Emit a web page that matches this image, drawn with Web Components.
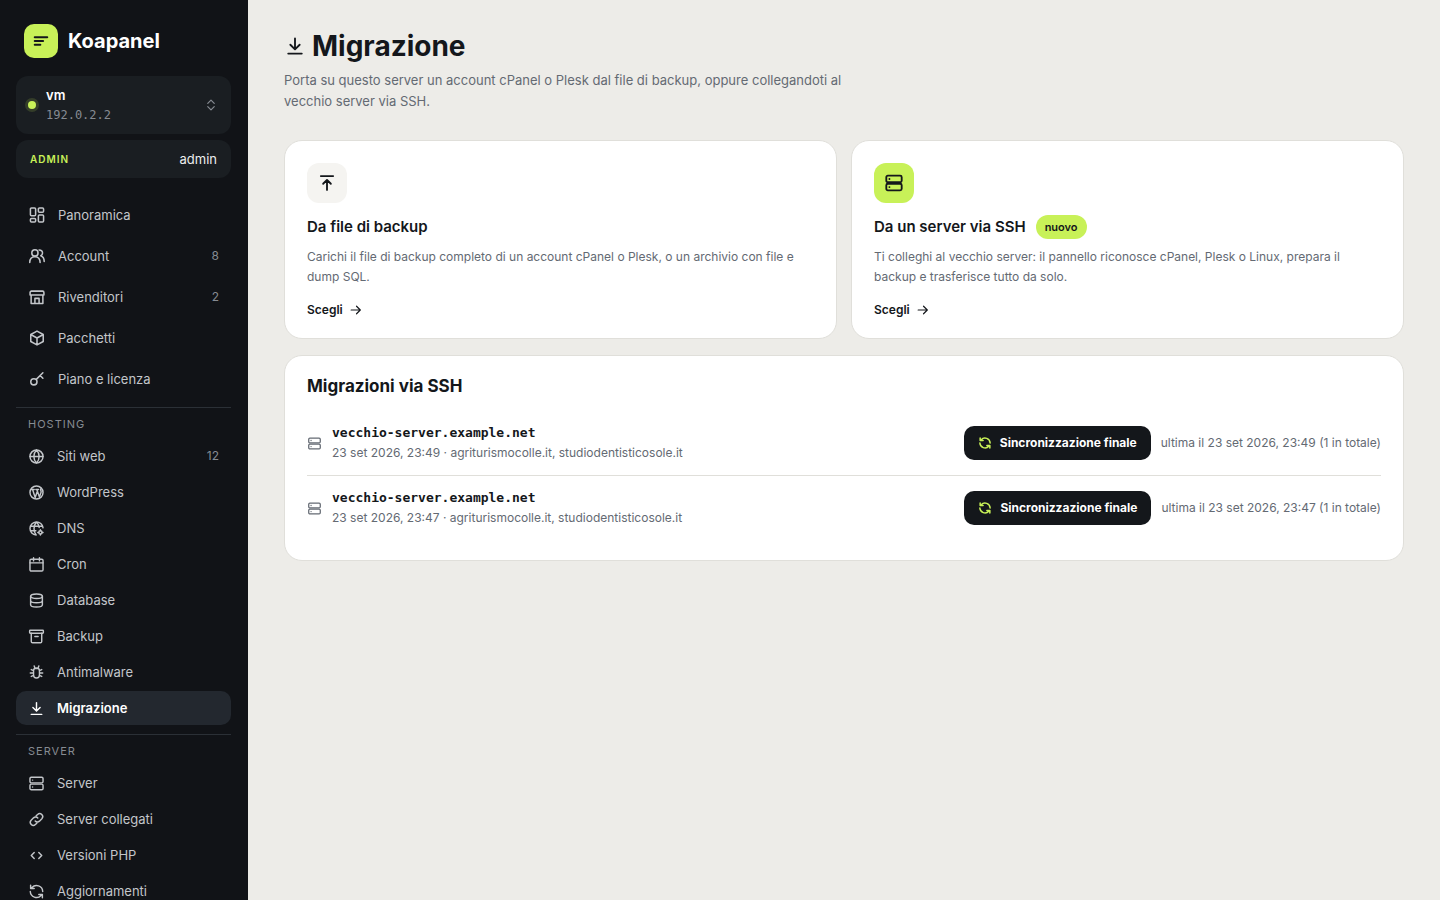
<!DOCTYPE html>
<html lang="it">
<head>
<meta charset="utf-8">
<meta name="viewport" content="width=device-width, initial-scale=1">
<title>Migrazione · Koapanel</title>
<style>
  :root {
    --ink: #14171b;
    --sidebar: #111317;
    --sidebar-box: #1a1e22;
    --sidebar-active: #23282f;
    --sidebar-line: #2b3036;
    --sidebar-text: #c3c6ca;
    --sidebar-muted: #868b92;
    --lime: #c8f158;
    --page: #edece8;
    --card: #ffffff;
    --line: #e0dfda;
    --muted: #646a73;
    --mono: "DejaVu Sans Mono", monospace;
  }

  body {
    margin: 0;
    background: var(--page);
    color: var(--ink);
    font: 13px/20px Inter, sans-serif;
  }
</style>
</head>
<body>
<kp-app>
  <kp-sidebar slot="sidebar">
    <kp-server-switch slot="top" name="vm" address="192.0.2.2"></kp-server-switch>
    <kp-role slot="top" role-name="ADMIN">admin</kp-role>

    <kp-nav-group large>
      <kp-nav-item icon="dashboard">Panoramica</kp-nav-item>
      <kp-nav-item icon="users" count="8">Account</kp-nav-item>
      <kp-nav-item icon="store" count="2">Rivenditori</kp-nav-item>
      <kp-nav-item icon="box">Pacchetti</kp-nav-item>
      <kp-nav-item icon="key">Piano e licenza</kp-nav-item>
    </kp-nav-group>
    <kp-nav-group label="HOSTING">
      <kp-nav-item icon="globe" count="12">Siti web</kp-nav-item>
      <kp-nav-item icon="wordpress">WordPress</kp-nav-item>
      <kp-nav-item icon="dns">DNS</kp-nav-item>
      <kp-nav-item icon="calendar">Cron</kp-nav-item>
      <kp-nav-item icon="database">Database</kp-nav-item>
      <kp-nav-item icon="archive">Backup</kp-nav-item>
      <kp-nav-item icon="bug">Antimalware</kp-nav-item>
      <kp-nav-item icon="download" active>Migrazione</kp-nav-item>
    </kp-nav-group>
    <kp-nav-group label="SERVER">
      <kp-nav-item icon="server">Server</kp-nav-item>
      <kp-nav-item icon="link">Server collegati</kp-nav-item>
      <kp-nav-item icon="code">Versioni PHP</kp-nav-item>
      <kp-nav-item icon="refresh">Aggiornamenti</kp-nav-item>
    </kp-nav-group>
  </kp-sidebar>

  <kp-page-header icon="download" heading="Migrazione">Porta su questo server un account cPanel o Plesk dal file di backup, oppure collegandoti al vecchio server via SSH.</kp-page-header>

  <kp-choices>
    <kp-choice icon="upload" heading="Da file di backup">Carichi il file di backup completo di un account cPanel o Plesk, o un archivio con file e dump SQL.</kp-choice>
    <kp-choice icon="server" heading="Da un server via SSH" badge="nuovo" accent>Ti colleghi al vecchio server: il pannello riconosce cPanel, Plesk o Linux, prepara il backup e trasferisce tutto da solo.</kp-choice>
  </kp-choices>

  <kp-panel heading="Migrazioni via SSH">
    <kp-migration host="vecchio-server.example.net" last="ultima il 23 set 2026, 23:49 (1 in totale)">23 set 2026, 23:49 · agriturismocolle.it, studiodentisticosole.it</kp-migration>
    <kp-migration host="vecchio-server.example.net" last="ultima il 23 set 2026, 23:47 (1 in totale)">23 set 2026, 23:47 · agriturismocolle.it, studiodentisticosole.it</kp-migration>
  </kp-panel>
</kp-app>

<script>
const ICONS = {
  logo: '<path d="M3 6.5h18M3 12h12M3 17.5h8"/>',
  dashboard: '<rect x="2.5" y="2" width="7.5" height="11" rx="1.5"/><rect x="14" y="2" width="7.5" height="6" rx="1.5"/><rect x="2.5" y="17" width="7.5" height="5" rx="1.5"/><rect x="14" y="12" width="7.5" height="10" rx="1.5"/>',
  users: '<circle cx="9" cy="7.5" r="4.5"/><path d="M1.500 21.500c0-5 2.700-8.500 7.500-8.500s7.500 3.500 7.500 8.500M15 3.200c3 .1 5 1.900 5 4.500 0 1.800-1 3.300-2.600 4 3 1.100 5 4.300 5 8.300"/>',
  store: '<path d="M2 9V5.500a2 2 0 0 1 2-2h16a2 2 0 0 1 2 2V9zM3.500 9v12.500h17V9M9 21v-7h6v7"/>',
  box: '<path d="M12 2l9 5v10l-9 5-9-5V7zM3.500 7.300L12 12l8.500-4.700M12 12v9.500"/>',
  key: '<circle cx="7.500" cy="16" r="4.500"/><path d="M11 12.500L20.500 3M16.500 7l4 4"/>',
  globe: '<circle cx="12" cy="12" r="10"/><path d="M2 12h20M12 2c-5.400 5.500-5.400 14.500 0 20M12 2c5.400 5.500 5.400 14.500 0 20"/>',
  wordpress: '<circle cx="12" cy="12" r="10"/><path d="M4.500 7.500h4M11 7.500h4M6 7.500l4 12 3-8.500M12.500 7.500l4 11.500 2.500-7.500c.7-2.200-1.600-3.400-.6-5"/>',
  dns: '<path d="M11.500 22A10 10 0 1 1 22 11M2.500 8.500h19M2.500 15.500H11M12 2C7 7.500 7 16.500 11.500 22M12 2c2.700 2.800 4 6 4.100 8.500"/><circle cx="18" cy="18" r="2.500"/><path d="M18 14v1.500M18 20.500V22M14 18h1.500M20.500 18H22"/>',
  calendar: '<rect x="2" y="4" width="20" height="18" rx="2"/><path d="M2 9.500h20M7.500 1.500v5M16.500 1.500v5"/>',
  database: '<ellipse cx="12" cy="5.500" rx="9" ry="3.500"/><path d="M3 5.500v13c0 2 4 3.500 9 3.500s9-1.500 9-3.500v-13M3 12c0 2 4 3.500 9 3.500s9-1.500 9-3.500"/>',
  archive: '<rect x="1.500" y="2.500" width="21" height="4.500" rx="1"/><path d="M4 7v12.500a2 2 0 0 0 2 2h12a2 2 0 0 0 2-2V7M9.500 12h5"/>',
  bug: '<path d="M7.500 9.500a4.500 4.500 0 0 1 9 0V16a4.500 4.500 0 0 1-9 0zM8.500 6h7M8.500 2l1 3M15.500 2l-1 3M7.500 9L4 7.500M16.500 9L20 7.500M7.500 12.800H2.500M16.500 12.800h5M7.500 16.500L4 18M16.500 16.500L20 18"/>',
  download: '<path d="M12 3v12.500M6.500 10.500L12 16l5.500-5.500M4 21h16"/>',
  upload: '<path d="M12 21V8.500M7 13l5-5 5 5M4 3h16"/>',
  server: '<rect x="2" y="2.500" width="20" height="8.500" rx="2"/><rect x="2" y="13" width="20" height="8.500" rx="2"/><path d="M6 6.800h.1M6 17.300h.1"/>',
  link: '<path d="M10 14.200a4.500 4.500 0 0 0 6.500.3l3.700-3.700a4.600 4.600 0 0 0-6.500-6.500l-2.200 2.100M14 9.800a4.500 4.500 0 0 0-6.500-.3l-3.700 3.700a4.600 4.600 0 0 0 6.500 6.500l2.200-2.100"/>',
  code: '<path d="M8.500 7.500L4 12l4.500 4.500M15.500 7.500L20 12l-4.500 4.500"/>',
  refresh: '<path d="M21.500 12A9.500 9.500 0 0 0 5 6M2.500 12A9.500 9.500 0 0 0 19 18M3 2.500v5h5.500M21 21.500v-5h-5.500"/>',
  arrow: '<path d="M3 12h17M13 5l7 7-7 7"/>',
  updown: '<path d="M5 8.500l7-7 7 7M5 15.500l7 7 7-7"/>',
};

// shared by every element: attributes are read once, when it is connected
class KpElement extends HTMLElement {
  constructor() {
    super();
    this.shadow = this.attachShadow({ mode: 'open' });
  }

  connectedCallback() {
    this.shadow.innerHTML = this.render();
  }

  attr(name) {
    return this.getAttribute(name) || '';
  }
}

class KpIcon extends KpElement {
  render() {
    return `
      <style>
        :host {
          display: block;
          flex: none;
          width: var(--icon-size, 17px);
          height: var(--icon-size, 17px);
        }

        svg {
          display: block;
          width: 100%;
          height: 100%;
          fill: none;
          stroke: currentColor;
          stroke-width: var(--icon-stroke, 2.2);
          stroke-linecap: round;
          stroke-linejoin: round;
        }
      </style>
      <svg viewBox="-1 -1 26 26" aria-hidden="true">${ICONS[this.attr('name')]}</svg>
    `;
  }
}

class KpApp extends KpElement {
  render() {
    return `
      <style>
        :host {
          display: grid;
          grid-template-columns: 248px minmax(0, 1fr);
          min-height: 100vh;
        }

        main {
          display: flex;
          flex-direction: column;
          gap: 16px;
          padding: 28px 36px;
        }
      </style>
      <slot name="sidebar"></slot>
      <main><slot></slot></main>
    `;
  }
}

class KpSidebar extends KpElement {
  render() {
    return `
      <style>
        :host {
          display: flex;
          flex-direction: column;
          box-sizing: border-box;
          position: sticky;
          top: 0;
          height: 100vh;
          padding: 24px 17px 0 16px;
          overflow-y: auto;
          scrollbar-width: none;
          background: var(--sidebar);
          color: var(--sidebar-text);
        }

        .brand {
          display: flex;
          align-items: center;
          gap: 10px;
          padding: 0 8px;
          margin-bottom: 18px;
          color: #fff;
          font-size: 20px;
          font-weight: 700;
          text-decoration: none;
        }

        .mark {
          display: grid;
          place-items: center;
          width: 34px;
          height: 34px;
          border-radius: 10px;
          background: var(--lime);
          color: var(--ink);
          --icon-size: 18px;
          --icon-stroke: 3;
        }

        .top {
          display: flex;
          flex-direction: column;
          gap: 6px;
          margin-bottom: 18px;
        }
      </style>
      <a class="brand" href="#"><span class="mark"><kp-icon name="logo"></kp-icon></span>Koapanel</a>
      <div class="top"><slot name="top"></slot></div>
      <nav><slot></slot></nav>
    `;
  }
}

class KpServerSwitch extends KpElement {
  render() {
    return `
      <style>
        :host {
          display: block;
        }

        button {
          display: flex;
          align-items: center;
          gap: 10px;
          width: 100%;
          padding: 9px 14px 9px 12px;
          border: 0;
          border-radius: 12px;
          background: var(--sidebar-box);
          color: var(--sidebar-muted);
          font: inherit;
          text-align: left;
          cursor: pointer;
          --icon-size: 12px;
          --icon-stroke: 2.6;
        }

        .dot {
          width: 8px;
          height: 8px;
          border-radius: 50%;
          background: var(--lime);
          box-shadow: 0 0 0 3px rgba(200, 241, 88, 0.15);
        }

        .text {
          flex: 1;
        }

        .name {
          display: block;
          color: #fff;
          font-weight: 600;
        }

        .address {
          display: block;
          font: 12px/20px var(--mono);
        }
      </style>
      <button type="button">
        <span class="dot"></span>
        <span class="text">
          <span class="name">${this.attr('name')}</span>
          <span class="address">${this.attr('address')}</span>
        </span>
        <kp-icon name="updown"></kp-icon>
      </button>
    `;
  }
}

class KpRole extends KpElement {
  render() {
    return `
      <style>
        :host {
          display: flex;
          align-items: center;
          justify-content: space-between;
          padding: 9px 14px;
          border-radius: 12px;
          background: var(--sidebar-box);
          color: #eceded;
        }

        b {
          color: var(--lime);
          font-size: 10px;
          font-weight: 600;
          letter-spacing: 1px;
        }
      </style>
      <b>${this.attr('role-name')}</b>
      <span><slot></slot></span>
    `;
  }
}

class KpNavGroup extends KpElement {
  render() {
    const label = this.attr('label');
    return `
      <style>
        :host {
          display: flex;
          flex-direction: column;
          gap: 2px;
        }

        :host([large]) {
          gap: 3px;
          --item-height: 38px;
          --icon-size: 18px;
        }

        :host([label]) {
          margin-top: 9px;
          border-top: 1px solid var(--sidebar-line);
        }

        h2 {
          margin: 8px 12px 4px;
          color: var(--sidebar-muted);
          font-size: 11px;
          font-weight: 400;
          line-height: 17px;
          letter-spacing: 1px;
        }
      </style>
      ${label ? `<h2>${label}</h2>` : ''}
      <slot></slot>
    `;
  }
}

class KpNavItem extends KpElement {
  render() {
    const count = this.attr('count');
    return `
      <style>
        :host {
          display: block;
        }

        a {
          display: flex;
          align-items: center;
          gap: 12px;
          height: var(--item-height, 34px);
          padding: 0 12px;
          border-radius: 10px;
          color: inherit;
          text-decoration: none;
        }

        :host([active]) a {
          background: var(--sidebar-active);
          color: #fff;
          font-weight: 600;
        }

        .count {
          margin-left: auto;
          color: var(--sidebar-muted);
          font-size: 12px;
        }
      </style>
      <a href="#"${this.hasAttribute('active') ? ' aria-current="page"' : ''}>
        <kp-icon name="${this.attr('icon')}"></kp-icon>
        <slot></slot>
        ${count ? `<span class="count">${count}</span>` : ''}
      </a>
    `;
  }
}

class KpPageHeader extends KpElement {
  render() {
    return `
      <style>
        :host {
          display: block;
          margin-bottom: 12px;
        }

        h1 {
          display: flex;
          align-items: center;
          gap: 6px;
          margin: 0 0 6px;
          font-size: 28px;
          font-weight: 700;
          line-height: 36px;
          --icon-size: 22px;
        }

        p {
          max-width: 580px;
          margin: 0;
          color: var(--muted);
          line-height: 21px;
        }
      </style>
      <h1><kp-icon name="${this.attr('icon')}"></kp-icon>${this.attr('heading')}</h1>
      <p><slot></slot></p>
    `;
  }
}

class KpChoices extends KpElement {
  render() {
    return `
      <style>
        :host {
          display: grid;
          grid-template-columns: repeat(auto-fit, minmax(320px, 1fr));
          gap: 14px;
        }
      </style>
      <slot></slot>
    `;
  }
}

class KpChoice extends KpElement {
  render() {
    const badge = this.attr('badge');
    return `
      <style>
        :host {
          display: block;
        }

        a {
          display: block;
          box-sizing: border-box;
          height: 100%;
          padding: 22px 22px 18px;
          border: 1px solid var(--line);
          border-radius: 18px;
          background: var(--card);
          color: var(--ink);
          text-decoration: none;
        }

        .tile {
          display: grid;
          place-items: center;
          width: 40px;
          height: 40px;
          border-radius: 12px;
          background: #f5f4f1;
          --icon-size: 20px;
          --icon-stroke: 2.4;
        }

        :host([accent]) .tile {
          background: var(--lime);
        }

        h2 {
          display: flex;
          align-items: center;
          gap: 10px;
          margin: 12px 0 8px;
          font-size: 15px;
          font-weight: 600;
          line-height: 24px;
        }

        .badge {
          padding: 0 9px;
          border-radius: 12px;
          background: var(--lime);
          font-size: 11px;
        }

        p {
          margin: 0;
          color: var(--muted);
          font-size: 12px;
          line-height: 20px;
        }

        .go {
          display: flex;
          align-items: center;
          gap: 6px;
          margin-top: 13px;
          font-size: 12px;
          font-weight: 600;
          --icon-size: 14px;
        }
      </style>
      <a href="#">
        <span class="tile"><kp-icon name="${this.attr('icon')}"></kp-icon></span>
        <h2>${this.attr('heading')}${badge ? `<span class="badge">${badge}</span>` : ''}</h2>
        <p><slot></slot></p>
        <span class="go">Scegli<kp-icon name="arrow"></kp-icon></span>
      </a>
    `;
  }
}

class KpPanel extends KpElement {
  render() {
    return `
      <style>
        :host {
          display: block;
          padding: 18px 22px 20px;
          border: 1px solid var(--line);
          border-radius: 18px;
          background: var(--card);
        }

        h2 {
          margin: 0 0 13px;
          font-size: 17px;
          font-weight: 700;
          line-height: 24px;
        }

        ::slotted(:not(:last-child)) {
          border-bottom: 1px solid var(--line);
        }
      </style>
      <h2>${this.attr('heading')}</h2>
      <slot></slot>
    `;
  }
}

class KpMigration extends KpElement {
  render() {
    return `
      <style>
        :host {
          display: flex;
          align-items: center;
          gap: 10px;
          padding: 12px 0;
          color: var(--muted);
          font-size: 12px;
          --icon-size: 15px;
        }

        .text {
          flex: 1;
          min-width: 0;
        }

        .host {
          display: block;
          color: var(--ink);
          font: 700 13px/20px var(--mono);
        }

        button {
          display: flex;
          align-items: center;
          gap: 8px;
          height: 34px;
          padding: 0 14px;
          border: 0;
          border-radius: 10px;
          background: var(--ink);
          color: #fff;
          font: inherit;
          font-weight: 700;
          cursor: pointer;
        }

        button kp-icon {
          color: var(--lime);
          --icon-size: 14px;
          --icon-stroke: 2.8;
        }
      </style>
      <kp-icon name="server"></kp-icon>
      <div class="text">
        <span class="host">${this.attr('host')}</span>
        <slot></slot>
      </div>
      <button type="button"><kp-icon name="refresh"></kp-icon>Sincronizzazione finale</button>
      <span>${this.attr('last')}</span>
    `;
  }
}

customElements.define('kp-icon', KpIcon);
customElements.define('kp-app', KpApp);
customElements.define('kp-sidebar', KpSidebar);
customElements.define('kp-server-switch', KpServerSwitch);
customElements.define('kp-role', KpRole);
customElements.define('kp-nav-group', KpNavGroup);
customElements.define('kp-nav-item', KpNavItem);
customElements.define('kp-page-header', KpPageHeader);
customElements.define('kp-choices', KpChoices);
customElements.define('kp-choice', KpChoice);
customElements.define('kp-panel', KpPanel);
customElements.define('kp-migration', KpMigration);
</script>
</body>
</html>
